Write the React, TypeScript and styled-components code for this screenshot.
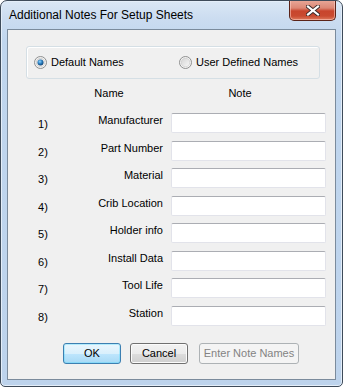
import React, { useState } from 'react'
import styled, { createGlobalStyle, css } from 'styled-components'

const GlobalStyle = createGlobalStyle`
  html, body {
    margin: 0;
    padding: 0;
    background: #ffffff;
  }
  * {
    box-sizing: border-box;
  }
`

const noteNames = [
  'Manufacturer',
  'Part Number',
  'Material',
  'Crib Location',
  'Holder info',
  'Install Data',
  'Tool Life',
  'Station',
]

const App = () => {
  const [mode, setMode] = useState<'default' | 'user'>('default')

  return (
    <>
      <GlobalStyle />
      <Window>
        <TitleBar>
          <Title>Additional Notes For Setup Sheets</Title>
          <CloseButton aria-label="Close">
            <svg width="14" height="11" viewBox="0 0 14 11">
              <path
                d="M2 1.5 L12 9.5 M12 1.5 L2 9.5"
                stroke="#3a2a2a"
                strokeWidth="4"
                strokeLinecap="square"
              />
              <path
                d="M2 1.5 L12 9.5 M12 1.5 L2 9.5"
                stroke="#ffffff"
                strokeWidth="2.2"
                strokeLinecap="square"
              />
            </svg>
          </CloseButton>
        </TitleBar>
        <Client>
          <GroupBox>
            <RadioOption onClick={() => setMode('default')} wide>
              <Radio checked={mode === 'default'} />
              <span>Default Names</span>
            </RadioOption>
            <RadioOption onClick={() => setMode('user')}>
              <Radio checked={mode === 'user'} />
              <span>User Defined Names</span>
            </RadioOption>
          </GroupBox>
          <HeaderRow>
            <HeaderCell>Name</HeaderCell>
            <HeaderCell>Note</HeaderCell>
          </HeaderRow>
          <NotesGrid>
            {noteNames.map((name, i) => (
              <React.Fragment key={name}>
                <RowNumber>{i + 1})</RowNumber>
                <RowLabel>{name}</RowLabel>
                <NoteInput />
              </React.Fragment>
            ))}
          </NotesGrid>
          <ButtonRow>
            <Button variant="default">OK</Button>
            <Button>Cancel</Button>
            <Button variant="disabled" disabled>
              Enter Note Names
            </Button>
          </ButtonRow>
        </Client>
      </Window>
    </>
  )
}

const Radio = ({ checked }: { checked: boolean }) => (
  <svg width="13" height="13" viewBox="0 0 13 13">
    <defs>
      <linearGradient id="rfill" x1="0" y1="0" x2="1" y2="1">
        <stop offset="0" stopColor="#d4d4d4" />
        <stop offset="1" stopColor="#f8f8f8" />
      </linearGradient>
      <radialGradient id="rdot" cx="0.4" cy="0.35" r="0.7">
        <stop offset="0" stopColor="#8fd3ff" />
        <stop offset="0.5" stopColor="#2b7fc0" />
        <stop offset="1" stopColor="#0e3d6c" />
      </radialGradient>
    </defs>
    <circle cx="6.5" cy="6.5" r="6" fill="#f4f4f4" stroke="#8e8f8f" strokeWidth="1" />
    <circle cx="6.5" cy="6.5" r="4.3" fill="url(#rfill)" stroke="#c6c6c6" strokeWidth="0.6" />
    {checked && <circle cx="6.5" cy="6.5" r="3" fill="url(#rdot)" />}
  </svg>
)

const Window = styled.div`
  width: 343px;
  height: 387px;
  display: flex;
  flex-direction: column;
  border: 1px solid #3e4b5a;
  border-radius: 7px 7px 5px 5px;
  background: linear-gradient(#dae7f5 0px, #cbdcf0 18px, #c0d6ee 40px, #bdd3ec 100%);
  box-shadow: inset 0 0 0 1px #e4eef9;
  overflow: hidden;
`

const TitleBar = styled.div`
  height: 28px;
  flex: none;
  display: flex;
  align-items: flex-start;
  padding-left: 8px;
`

const Title = styled.div`
  margin-top: 7px;
  font-family: 'Liberation Sans', Arial, sans-serif;
  font-size: 12px;
  line-height: 15px;
  color: #000000;
`

const CloseButton = styled.button`
  margin-left: auto;
  margin-right: 6px;
  margin-top: -1px;
  width: 47px;
  height: 21px;
  padding: 0;
  display: flex;
  align-items: center;
  justify-content: center;
  border: 1px solid #5a2318;
  border-top: none;
  border-radius: 0 0 5px 5px;
  background: linear-gradient(#e9a99a 0%, #dc8775 40%, #c8452d 55%, #c94a30 80%, #de7a5d 100%);
  box-shadow: inset 0 0 0 1px rgba(255, 210, 200, 0.55);
`

const Client = styled.div`
  flex: 1;
  margin: 0 6px 6px 6px;
  border: 1px solid #7b8b9c;
  background: #f0f0f0;
  display: flex;
  flex-direction: column;
  font-family: 'Liberation Sans', Arial, sans-serif;
  font-size: 11px;
  color: #000000;
`

const GroupBox = styled.div`
  margin: 16px 0 0 18px;
  width: 294px;
  height: 33px;
  display: flex;
  align-items: center;
  padding-left: 7px;
  border: 1px solid #d5dfe5;
  border-radius: 3px;
  box-shadow: inset 1px 1px 0 #ffffff;
`

const RadioOption = styled.label<{ wide?: boolean }>`
  display: flex;
  align-items: center;
  gap: 4px;
  cursor: default;
  line-height: 13px;
  ${(props) => props.wide && css`
    width: 145px;
  `}
`

const HeaderRow = styled.div`
  display: flex;
  margin: 8px 0 0 51px;
  gap: 31px;
`

const HeaderCell = styled.div`
  width: 100px;
  text-align: center;
  line-height: 13px;
`

const NotesGrid = styled.div`
  margin-top: 13px;
  padding-left: 30px;
  display: grid;
  grid-template-columns: 40px 93px 155px;
  grid-auto-rows: 20px;
  row-gap: 7.57px;
`

const RowNumber = styled.div`
  padding-top: 5px;
  line-height: 13px;
`

const RowLabel = styled.div`
  text-align: right;
  padding-right: 8px;
  padding-top: 1px;
  line-height: 13px;
  white-space: nowrap;
`

const NoteInput = styled.input`
  width: 155px;
  height: 20px;
  margin: 0;
  padding: 0 3px;
  font: inherit;
  background: #ffffff;
  border: 1px solid #e2e3ea;
  border-top-color: #abadb3;
  border-radius: 2px;
  outline: none;
`

const ButtonRow = styled.div`
  display: flex;
  margin: 17px 0 0 55px;
`

type ButtonVariant = 'default' | 'normal' | 'disabled'

const Button = styled.button<{ variant?: ButtonVariant }>`
  height: 21px;
  width: 58px;
  margin-right: 9px;
  padding: 0;
  white-space: nowrap;
  font-family: 'Liberation Sans', Arial, sans-serif;
  font-size: 11px;
  color: #000000;
  border: 1px solid #707070;
  border-radius: 3px;
  background: linear-gradient(#f2f2f2 0%, #ebebeb 50%, #dddddd 51%, #cfcfcf 100%);
  box-shadow: inset 0 0 0 1px #fbfbfb;

  ${(props) => props.variant === 'default' && css`
    border-color: #3c7fb1;
    background: linear-gradient(#eaf6fd 0%, #d9f0fc 50%, #bee6fd 51%, #a7d9f5 100%);
    box-shadow: inset 0 0 0 1px #48d8fb55;
  `}

  ${(props) => props.variant === 'disabled' && css`
    margin-left: 2px;
    width: 100px;
    color: #838383;
    border-color: #adb2b5;
    background: #f4f4f4;
    box-shadow: none;
  `}
`

export default App
